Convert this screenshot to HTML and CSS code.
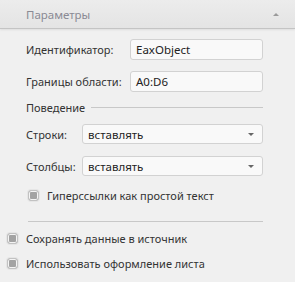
FILE: index.html
```html
<!DOCTYPE html>
<html lang="ru">
<head>
    <meta charset="UTF-8">
    <title>Параметры</title>
    <link rel="stylesheet" href="styles.css">
</head>
<body>
    <div class="panel-header">
        <span class="panel-title">Параметры</span>
        <span class="collapse-arrow"></span>
    </div>
    <div class="panel-body">
        <div class="group">
            <div class="row">
                <label class="label label-wide">Идентификатор:</label>
                <div class="field">EaxObject</div>
            </div>
            <div class="row">
                <label class="label label-wide">Границы области:</label>
                <div class="field">A0:D6</div>
            </div>
            <div class="section-title">
                <span>Поведение</span>
                <span class="section-line"></span>
            </div>
            <div class="row row-select">
                <label class="label">Строки:</label>
                <div class="field select">вставлять<span class="caret"></span></div>
            </div>
            <div class="row row-select">
                <label class="label">Столбцы:</label>
                <div class="field select">вставлять<span class="caret"></span></div>
            </div>
            <div class="check check-inner">
                <span class="box"></span>
                <span>Гиперссылки как простой текст</span>
            </div>
            <div class="separator"></div>
        </div>
        <div class="check">
            <span class="box"></span>
            <span>Сохранять данные в источник</span>
        </div>
        <div class="check">
            <span class="box"></span>
            <span>Использовать оформление листа</span>
        </div>
    </div>
</body>
</html>
```

FILE: styles.css
```css
body {
    margin: 0;
    width: 295px;
    height: 282px;
    background-color: #f0f0f0;
    font-family: "Noto Sans", "DejaVu Sans", sans-serif;
    font-size: 11px;
    color: #333333;
    overflow: hidden;
}

.panel-header {
    height: 28px;
    display: flex;
    align-items: center;
    justify-content: space-between;
    padding: 0 16px 0 26px;
    background: linear-gradient(#ececec, #e4e4e4);
    border-bottom: 1px solid #c4c4c4;
    box-shadow: 0 1px 2px rgba(0, 0, 0, 0.08);
}

.panel-title {
    color: #8a8a94;
    font-size: 11.5px;
}

.collapse-arrow {
    width: 0;
    height: 0;
    border-left: 3px solid transparent;
    border-right: 3px solid transparent;
    border-bottom: 3px solid #9a9a9a;
}

.panel-body {
    padding: 10px 0 0 7px;
}

.group {
    padding-left: 19px;
    width: 237px;
}

.row {
    display: flex;
    align-items: center;
    height: 21px;
    margin-bottom: 11px;
}

.row-select {
    height: 20px;
    margin-bottom: 12px;
}

.label {
    width: 56px;
    flex-shrink: 0;
}

.label-wide {
    width: 104px;
}

.field {
    flex: 1;
    height: 100%;
    box-sizing: border-box;
    border: 1px solid #d2d2d2;
    border-radius: 3px;
    background-color: #f9f9f9;
    padding: 0 5px;
    display: flex;
    align-items: center;
    color: #222222;
    font-size: 11.5px;
}

.select {
    justify-content: space-between;
    padding-right: 8px;
}

.caret {
    width: 0;
    height: 0;
    border-left: 3px solid transparent;
    border-right: 3px solid transparent;
    border-top: 3px solid #666666;
}

.section-title {
    display: flex;
    align-items: center;
    gap: 6px;
    height: 14px;
    margin: -3px 0 10px;
}

.section-line {
    flex: 1;
    height: 1px;
    background-color: #c8c8c8;
}

.check {
    display: flex;
    align-items: center;
    gap: 8px;
    height: 14px;
    margin-bottom: 11px;
}

.check-inner {
    margin: 0 0 0 2px;
    gap: 8px;
}

.box {
    width: 9px;
    height: 9px;
    border: 1px solid #c2c2c2;
    border-radius: 3px;
    background-color: #a3a3a3;
    box-shadow: inset 0 0 0 1px #f4f4f4, 0 0 0 1px #e6e6e6;
}

.separator {
    height: 1px;
    background-color: #c8c8c8;
    margin: 19px 0 9px 2px;
}
```
